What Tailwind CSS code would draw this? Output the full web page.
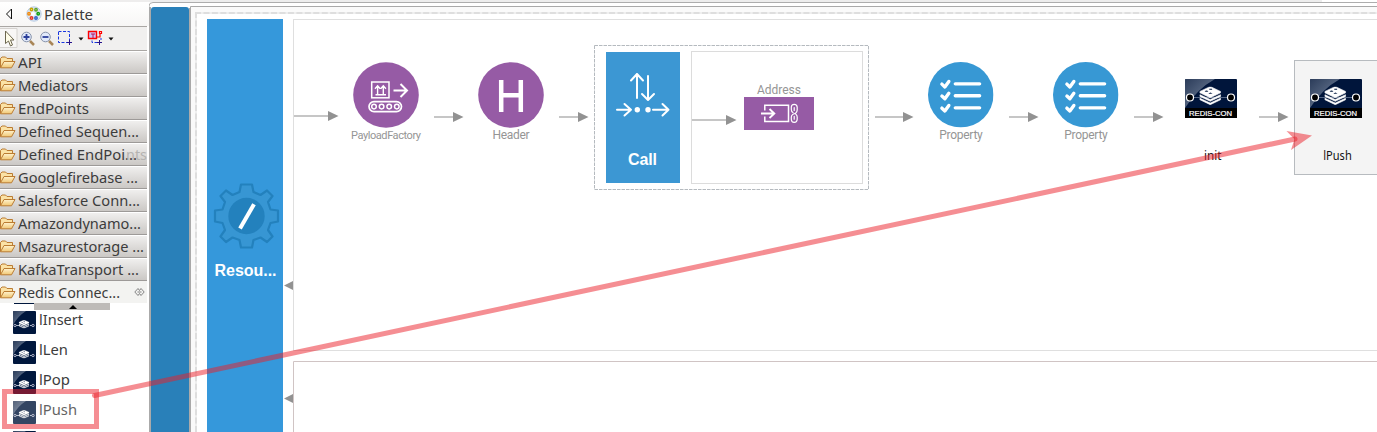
<!DOCTYPE html>
<html lang="en">
<head>
<meta charset="utf-8">
<title>Palette</title>
<script src="https://cdn.jsdelivr.net/npm/@tailwindcss/browser@4"></script>
</head>
<body class="relative w-[1377px] h-[432px] overflow-hidden bg-white font-['Noto_Sans',sans-serif] text-[#3c3c3c]">
<svg class="absolute w-0 h-0">
  <defs>
    <linearGradient id="fold" x1="0" y1="0" x2="0" y2="1"><stop offset="0" stop-color="#fff3cf"/><stop offset="1" stop-color="#f0c671"/></linearGradient>
    <linearGradient id="sheen" x1="0" y1="0" x2="1" y2="1"><stop offset="0" stop-color="#33435f"/><stop offset=".55" stop-color="#66758e"/></linearGradient>
    <symbol id="folder" viewBox="0 0 16 13">
      <path d="M.5 11.5V2.5L2 1h3.500L7 2.500h5.500V6" fill="#fbe2a5" stroke="#bb7c33"/>
      <path d="M.5 11.8 4 5.500h11L11.500 11.800z" fill="url(#fold)" stroke="#bb7c33" stroke-linejoin="round"/>
    </symbol>
    <symbol id="stack" viewBox="0 0 24 18" preserveAspectRatio="none">
      <g fill="#fff" stroke="#fff" stroke-width=".6" stroke-linejoin="round"><path d="M1 4.800 11 .4h2L23 4.800v1.400L12 11 1 6.200z"/>
      <path d="M1 8 12 12.700 23 8v1.700L12 14.400 1 9.700z"/><path d="M1 11.400 12 16.100l11-4.700v1.500L12 17.700 1 12.900z"/></g>
      <path d="M10 7.200 12 5.800l2.500 1zM11 2.200h3v1h-3zM6 4.500q2-1 4 0 -2 1.200-4 0z" fill="#00173d"/>
    </symbol>
    <symbol id="redis" viewBox="0 0 52 39">
      <rect width="52" height="39" rx="1" fill="#00153b"/>
      <path d="M1 0H30Q12 10 0 29V1z" fill="url(#sheen)" opacity=".85"/>
      <path d="M5 18.500H46" stroke="#6c7c98" stroke-width=".8"/>
      <use href="#stack" x="14" y="7.500" width="22.500" height="18.500"/>
      <circle cx="5" cy="18.500" r="3.500" fill="#000" stroke="#fff" stroke-width="1.200"/>
      <circle cx="46" cy="18.500" r="3.500" fill="#000" stroke="#fff" stroke-width="1.200"/>
      <rect y="29" width="52" height="10" fill="#000"/>
      <text x="4" y="36.500" font-family="Liberation Sans" font-size="7" stroke="#fff" stroke-width=".2" fill="#fff" textLength="43" lengthAdjust="spacingAndGlyphs">REDIS-CON</text>
    </symbol>
    <symbol id="redisSmall" viewBox="0 0 23 23">
      <rect width="23" height="23" rx="1" fill="#00173d"/><path d="M0 0H13Q5 5 0 14z" fill="url(#sheen)" opacity=".85"/>
      <path d="M2 14.500h5M17 14.500h3" stroke="#aeb8c8"/>
      <use href="#stack" x="5.500" y="9" width="11" height="8.500"/>
      <circle cx="2" cy="14.500" r="1.200" fill="#00173d" stroke="#ccd" stroke-width=".8"/><circle cx="20" cy="14.500" r="1.200" fill="#00173d" stroke="#ccd" stroke-width=".8"/>
    </symbol>
    <symbol id="list" viewBox="0 0 66 66">
      <circle cx="33" cy="33" r="33" fill="#3798d4"/>
      <g fill="none" stroke="#fff" stroke-linecap="round">
        <g stroke-width="3.400"><path d="M27.500 22H52M27.500 34H52M27.500 46.200H52"/></g>
        <g stroke-width="3.400" stroke-linejoin="round"><path d="M14 22.300l3 2.800 4-5.500M14 34.300l3 2.800 4-5.500M14 46.500l3 2.800 4-5.500"/></g>
      </g>
    </symbol>
    <symbol id="arrow" viewBox="0 0 30 12"><path d="M0 6H20" stroke="#c6c6c6" stroke-width="2"/><path d="M19 1 29.500 6 19 11z" fill="#929292"/></symbol>
  </defs>
</svg>

<div class="flex h-full">
  <aside class="w-[149px] shrink-0 h-full bg-white overflow-hidden">
    <header class="flex items-center h-[26px] pt-[4px] border-t-2 border-[#eeeded] pl-[5px] bg-gradient-to-b from-white to-[#f7f6f5]">
      <svg class="w-[9px] h-[12px] mr-[12px] mb-[4px]" viewBox="0 0 9 12"><path d="M6.500 1v10L1.500 6z" fill="none" stroke="#111"/></svg>
      <svg class="w-[16px] h-[16px] mb-[4px]" viewBox="0 0 16 16"><circle cx="8" cy="8" r="7.200" fill="#dce7f4" stroke="#b9cbe3"/><circle cx="7" cy="8" r="2" fill="#fff"/>
        <g fill="#fff" stroke-width="1.500"><circle cx="5.500" cy="3.500" r="1.200" stroke="#c9a600"/><circle cx="10" cy="3.700" r="1.200" stroke="#62a52a"/><circle cx="12.200" cy="7.700" r="1.200" stroke="#12a012"/><circle cx="3" cy="7.700" r="1.200" stroke="#f08b10"/><circle cx="5.500" cy="12" r="1.200" stroke="#e33b28"/><circle cx="10" cy="12" r="1.200" stroke="#2e66c9"/></g></svg>
      <svg class="ml-[2px] w-[60px] h-[20px] mb-[4px] text-[15px] fill-[#3c3c3c]"><text x="0" y="15.500" textLength="49" lengthAdjust="spacingAndGlyphs">Palette</text></svg>
    </header>
    <div class="h-[25px] w-[147px] border-t border-b border-[#aaa7a4] bg-[#f1f0ef]">
      <svg class="w-[147px] h-[23px]" viewBox="0 27 147 23">
        <path d="M0 28.500H17V47.500H0" fill="#f8f7f6" stroke="#d5d2cf"/>
        <path d="M5.500 31v12.500l3-2.500 2 5 2-1-2-5h3.500z" fill="#fffde8" stroke="#6d6750"/>
        <g><path d="M30 41l4 4" stroke="#a98657" stroke-width="2.500"/><circle cx="26.500" cy="37" r="4.800" fill="#e1e9fa" stroke="#8793aa"/><path d="M23.500 37h6M26.500 34v6" stroke="#2b3f9a" stroke-width="1.800"/></g>
        <g><path d="M49 41l4 4" stroke="#a98657" stroke-width="2.500"/><circle cx="45.500" cy="37" r="4.800" fill="#e1e9fa" stroke="#8793aa"/><path d="M42.500 37h6" stroke="#2b3f9a" stroke-width="1.800"/></g>
        <path d="M58.500 31.500H69.500V42.500H58.500z" fill="none" stroke="#1836e0" stroke-dasharray="3 1.500"/>
        <path d="M67 42.500h5M69.500 40v5" stroke="#27138a"/>
        <path d="M78.500 37.500h5l-2.500 3zM108.500 37.500h5l-2.500 3z" fill="#111"/>
        <path d="M92 36v6.500h5M101 38v2" fill="none" stroke="#1836e0" stroke-dasharray="3 1.500"/>
        <path d="M88.500 31.500h8v7h-8z" fill="#c9c3f5" stroke="#f00" stroke-width="1.400"/><path d="M91 34h4M93 34v4" stroke="#c0155a"/>
        <path d="M99.500 31.500h2v2h-2zM96 37h4v-3" fill="none" stroke="#f00" stroke-width="1.200"/>
        <path d="M97 42.500h5M99.500 40v5" stroke="#27138a"/>
      </svg>
    </div>
    <nav id="drawers" class="w-[147px]"></nav>
    <div class="flex justify-between items-center w-[147px] h-[22px] bg-[#f3f3f1] pr-[2px]">
      <div class="flex items-center"><svg class="w-[16px] h-[13px]"><use href="#folder"/></svg><svg class="ml-[2px] w-[110px] h-[21px] text-[15px] fill-[#3c3c3c]"><text x="0" y="15.500" textLength="102" lengthAdjust="spacingAndGlyphs">Redis Connec...</text></svg></div>
      <svg class="w-[11px] h-[8px]" viewBox="0 0 11 8"><path d="M4 .5 .8 4 4 7.500M7 .5 10.200 4 7 7.500M4 .5 5.500 2.500 7 .5M4 7.500 5.500 5.500 7 7.500M3.500 4h4" fill="none" stroke="#777" stroke-width=".9"/></svg>
    </div>
    <div class="flex h-[7px] pl-[14px]"><div class="w-[20px] h-[1px] bg-[#00173d]"></div><div class="w-[76px] h-[7px] bg-[#bebbb8]"><svg class="w-[8px] h-[4px] ml-[35px] mt-[2px]" viewBox="0 0 8 4"><path d="M0 4 4 0l4 4z"/></svg></div></div>
    <ul id="tools" class="pl-[13px]"></ul>
  </aside>

  <main class="relative grow h-full">
    <svg class="absolute left-0 top-0 w-[1228px] h-[432px]" viewBox="149 0 1228 432">
      <rect x="149" y="0" width="1173" height="2" fill="#ededed"/>
      <path d="M149 432V6Q149 2.500 153 2.500H1377" fill="#fff" stroke="#adadad" stroke-width="1"/>
      <path d="M149 7h2V432h-2z" fill="#aaa"/>
      <path d="M151 432V10Q151 7 154 7H186Q189 7 189 10V432z" fill="#2980b9"/>
      <path d="M189 8h2V432h-2z" fill="#aaa"/>
      <path d="M191 6.500H1377V432H191z" fill="#fafafa"/><path d="M190.500 432V6.500H1377" fill="none" stroke="#a9a9a9"/>
      <path d="M197 14H1377V432H197z" fill="#fff"/>
      <path d="M195 13H1377" stroke="#efefef" stroke-width="2"/><path d="M196 13V432" stroke="#efefef" stroke-width="2"/>
      <path d="M195 13H1377M196 12V432" fill="none" stroke="#dedede" stroke-width="2" stroke-dasharray="6 2.450"/>
      <rect x="207" y="19" width="76" height="413" fill="#3598db"/>
      <rect x="293.500" y="19.500" width="1100" height="331" fill="#fff" stroke="#dfdfdf"/>
      <path d="M293.500 432V361.500H1377" fill="#fff" stroke="#d0c4c4"/>
      <path d="M284 285.500 293 281v9zM284 398.500 293 394v9z" fill="#929292"/>
      <path d="M294 116H330" stroke="#c6c6c6" stroke-width="2"/>
      <path d="M328 111 338.500 116 328 121z" fill="#929292"/>
      <use href="#arrow" x="434" y="111" width="30" height="12"/><use href="#arrow" x="559" y="111" width="30" height="12"/>
      <use href="#arrow" x="1009" y="111" width="30" height="12"/><use href="#arrow" x="1134" y="111" width="30" height="12"/><use href="#arrow" x="1259" y="111" width="30" height="12"/>
      <path d="M875 117H904" stroke="#c6c6c6" stroke-width="2"/><path d="M903 112 913.500 117 903 122z" fill="#929292"/>
      <rect x="594.500" y="45.500" width="274" height="144" fill="#fff" stroke="#b5babf" stroke-dasharray="3.500 1"/>
      <rect x="691.500" y="51.500" width="171" height="132" fill="#fff" stroke="#dcdcdc"/>
      <path d="M692 120H728" stroke="#c6c6c6" stroke-width="2"/><path d="M726 115 736.500 120 726 125z" fill="#929292"/>
      <rect x="606" y="52" width="74" height="131" fill="#3c97d3"/>
      <g transform="translate(246.500 216)">
        <path d="M-5.500-31.500H5.500L7-24 14-21 20.500-25.500 26-20 21.500-14 24-6.500 31.500-5.500V5.500L24 7 21.500 14 26 20.500 20.500 26 14 21.500 7 24 5.500 31.500H-5.500L-7 24-14 21.500-20.500 26-26 20.500-21.500 14-24 7-31.500 5.500V-5.500L-24-6.500-21.500-14-26-20-20.500-25.500-14-21-7-24z" fill="#3796d3" stroke="#2381bd" stroke-width="2.200" stroke-linejoin="round"/>
        <circle r="18.200" fill="#2381bd"/><path d="M-6.500 12.500 7.500-11.800" stroke="#fff" stroke-width="4"/>
      </g>
      <g fill="none" stroke="#fff" stroke-width="2" stroke-linecap="round" stroke-linejoin="round">
        <path d="M637 98V74M631 80.500 637 74 643 80.500M648 76V99.500M642 94 648 100 654 94M617 109.800H631M624.500 104 631 109.800 624.500 115.500M653 109.800H668.500M662.500 104 668.500 109.800 662.500 115.500"/>
        <circle cx="637.300" cy="109.800" r="1.700" fill="#fff"/><circle cx="648" cy="109.800" r="1.700" fill="#fff"/>
      </g>
      <circle cx="386" cy="95" r="32.800" fill="#965ba5"/><circle cx="511" cy="95" r="32.800" fill="#965ba5"/>
      <g fill="none" stroke="#fff" stroke-width="1.500">
        <rect x="371.700" y="82" width="17.300" height="15.800"/><path d="M375.500 94.800h10.500M377.600 94V86.500M383.300 94V86.500M375 88.800l2.600-3 2.600 3M380.700 88.800l2.600-3 2.600 3" stroke-width="1.400"/>
        <path d="M393.500 90.500H407M400.500 84 407 90.500 400.500 97" stroke-width="2"/>
        <rect x="369" y="101.600" width="32.500" height="10" rx="5" stroke-width="1.700"/>
        <circle cx="374" cy="106.600" r="2.300"/><circle cx="381.600" cy="106.600" r="2.300"/><circle cx="389.200" cy="106.600" r="2.300"/><circle cx="396.800" cy="106.600" r="2.300"/>
      </g>
      <path d="M501.200 80V112M520.800 80V112M501.200 95.200H520.800" fill="none" stroke="#fff" stroke-width="4.500"/>
      <rect x="744" y="97" width="70" height="33" fill="#965ba5"/>
      <g fill="none" stroke="#fff" stroke-width="1.500">
        <path d="M764.800 110.500V105.200H788.500V121.500H764.800V116.500"/><path d="M761 113.500H774M769.500 109 774.300 113.500 769.500 118" stroke-width="1.900"/>
        <path d="M793 112.500Q791.300 111.500 791.300 109.500V107.300Q791.300 104.300 794.200 104.300T797.200 107.300V110Q797.200 112 795.500 113.300L793 114.300Q791.300 115.300 791.300 117V119.200Q791.300 122.300 794.200 122.300T797.200 119.200V117Q797.200 115.300 795.800 114.300M794.200 107.500V110.500M794.200 116.300V119.200" stroke-width="1.200" stroke-linecap="round"/>
      </g>
      <use href="#list" x="928" y="62" width="65.500" height="65.500"/><use href="#list" x="1053" y="62" width="65.500" height="65.500"/>
      <rect x="1294.500" y="60.500" width="90" height="114" fill="#f4f4f4" stroke="#b7bbbf"/>
      <use href="#redis" x="1185" y="79" width="52" height="39"/><use href="#redis" x="1310" y="79" width="52" height="39"/>
      <g text-anchor="middle" font-family="Roboto" font-size="12" fill="#959595">
        <text x="386" y="138.500" font-size="11" textLength="70">PayloadFactory</text>
        <text x="511" y="138.500" textLength="37">Header</text><text x="779" y="94.300" textLength="44">Address</text>
        <text x="961" y="138.500" textLength="43.500">Property</text><text x="1086" y="138.500" textLength="43.500">Property</text>
      </g>
      <g text-anchor="middle" font-family="Liberation Sans" font-weight="bold" font-size="16" fill="#fff">
        <text x="642.500" y="165" textLength="29">Call</text><text x="245.500" y="276" textLength="62">Resou...</text>
      </g>
      <g text-anchor="middle" font-family="Noto Sans" font-size="12.500" fill="#111">
        <text x="1212.700" y="160" textLength="17.500" lengthAdjust="spacingAndGlyphs">init</text><text x="1337.500" y="160" textLength="28.500" lengthAdjust="spacingAndGlyphs">lPush</text>
      </g>
    </svg>
  </main>
</div>

<!-- drag annotation -->
<svg class="absolute inset-0 w-[1377px] h-[432px]" viewBox="0 0 1377 432">
  <rect x="7" y="394" width="87" height="30" fill="#fffff8" fill-opacity=".2"/>
  <rect x="4.500" y="391.500" width="92" height="35" fill="none" stroke="#eb1d27" stroke-opacity=".5" stroke-width="5"/>
  <path d="M94.500 395.500 1295 139" stroke="#eb1d27" stroke-opacity=".5" stroke-width="5" stroke-linecap="round"/>
  <path d="M1312 135.500 1286.500 131 1294.500 139.300 1291 150z" fill="#eb1d27" fill-opacity=".5"/>
</svg>

<template id="drawer"><div class="flex items-center h-[23px] border-b border-[#9d9a98]"><div class="flex items-center w-full h-[21px] mt-[1px] bg-gradient-to-b from-[#f0efee] to-[#cbc8c5]"><svg class="w-[16px] h-[13px] shrink-0"><use href="#folder"/></svg><svg class="ml-[2px] w-[129px] h-[21px] text-[15px] fill-[#3c3c3c]"><text x="0" y="15.500" lengthAdjust="spacingAndGlyphs"></text></svg></div></div></template>
<template id="tool"><li class="flex h-[30px] pt-[1px]"><svg class="w-[23px] h-[23px]"><use href="#redisSmall"/></svg><svg class="ml-[3px] -mt-[2px] w-[60px] h-[21px] text-[15px] fill-[#3c3c3c]"><text x="0" y="16" lengthAdjust="spacingAndGlyphs"></text></svg></li></template>
<script>
  const fill = (tpl, host, rows) => rows.forEach(([label, w]) => {
    const n = document.getElementById(tpl).content.cloneNode(true);
    const t = n.querySelector('text');
    t.textContent = label;
    if (w) t.setAttribute('textLength', w);
    document.getElementById(host).appendChild(n);
  });
  fill('drawer', 'drawers', [['API',24],['Mediators',70],['EndPoints',71],['Defined Sequen...',121],['Defined EndPoi...',119],['Googlefirebase ...',120],['Salesforce Conn...',122],['Amazondynamo...',123],['Msazurestorage ...',126],['KafkaTransport ...',121]]);
  fill('tool', 'tools', [['lInsert',44],['lLen',29],['lPop',31],['lPush',38],['',0]]);
  // Fading tail of the truncated "Defined EndPoints" label.
  document.querySelectorAll('#drawers text')[4].insertAdjacentHTML('afterend', '<text x="108" y="15.500" textLength="21" lengthAdjust="spacingAndGlyphs" fill="#b5b3b1">nts</text>');
</script>
</body>
</html>
